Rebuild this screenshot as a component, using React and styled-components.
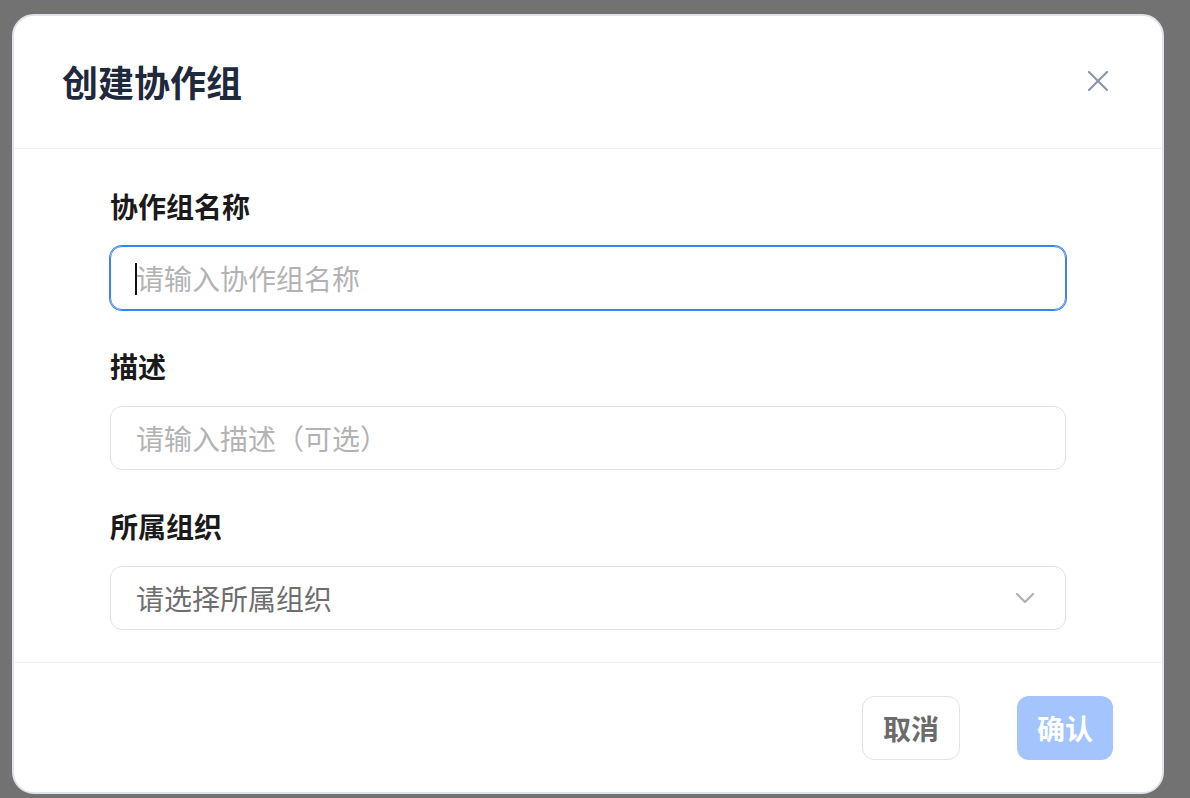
import styled, { createGlobalStyle } from "styled-components";

const GlobalStyle = createGlobalStyle`
  html, body {
    margin: 0;
    padding: 0;
    background: #727272;
    font-family: "Noto Sans CJK SC", "Noto Sans", sans-serif;
  }
  * { box-sizing: border-box; }
`;

// 背景遮罩
const Overlay = styled.div`
  width: 1190px;
  height: 798px;
  padding: 14px 0 0 12px;
  background: #727272;
  overflow: hidden;
`;

const Modal = styled.div`
  width: 1152px;
  height: 780px;
  background: #ffffff;
  border: 2px solid #dfe4ec;
  border-radius: 22px;
  display: flex;
  flex-direction: column;
  overflow: hidden;
`;

const Header = styled.div`
  height: 133px;
  padding: 0 48px 3px;
  display: flex;
  align-items: center;
  justify-content: space-between;
  border-bottom: 1px solid #eef1f5;
`;

const Title = styled.h2`
  margin: 0;
  font-size: 36px;
  line-height: 48px;
  font-weight: 700;
  color: #1e293b;
`;

const CloseBtn = styled.button`
  width: 32px;
  height: 32px;
  padding: 0;
  border: 0;
  background: transparent;
  display: flex;
  align-items: center;
  justify-content: center;
  color: #8a96a8;
  cursor: pointer;
`;

const Body = styled.div`
  flex: 1;
  padding: 38px 96px 32px;
  display: flex;
  flex-direction: column;
  gap: 37px;
`;

const Group = styled.div`
  display: flex;
  flex-direction: column;
`;

const Label = styled.label`
  font-size: 28px;
  line-height: 38px;
  font-weight: 700;
  color: #1a1a1a;
  margin-bottom: 21px;
`;

const FieldWrap = styled.div`
  position: relative;
  height: 64px;
  border-radius: 12px;
  border: 1px solid ${(p) => (p.focused ? "#3b82f6" : "#e3e3e3")};
  box-shadow: ${(p) => (p.focused ? "0 0 0 1px #3b82f6" : "none")};
  display: flex;
  align-items: center;
  padding: 0 30px 0 25px;
`;

const Input = styled.input`
  flex: 1;
  border: 0;
  outline: none;
  padding: 0;
  background: transparent;
  font-family: inherit;
  font-size: 28px;
  line-height: 40px;
  color: #1a1a1a;
  caret-color: transparent;
  &::placeholder {
    color: #b3b3b3;
  }
`;

// 输入框光标
const Caret = styled.span`
  position: absolute;
  left: 24px;
  top: 16px;
  width: 2px;
  height: 32px;
  background: #111;
`;

const SelectText = styled.span`
  flex: 1;
  font-size: 28px;
  line-height: 40px;
  color: #6e6e6e;
`;

const Footer = styled.div`
  flex: 1;
  border-top: 1px solid #eef1f5;
  padding: 0 49px 0 48px;
  display: flex;
  align-items: center;
  justify-content: flex-end;
  gap: 57px;
`;

const Btn = styled.button`
  height: 64px;
  padding: 0 20px;
  border-radius: 12px;
  font-family: inherit;
  font-size: 28px;
  font-weight: 700;
  line-height: 40px;
  cursor: pointer;
  border: 1px solid #e3e3e3;
  background: #ffffff;
  color: #6b6b6b;
`;

const PrimaryBtn = styled(Btn)`
  border: 0;
  background: #a3c4fc;
  color: #ffffff;
`;

function CloseIcon() {
  return (
    <svg width="22" height="22" viewBox="0 0 22 22" fill="none">
      <path
        d="M2 2 L20 20 M20 2 L2 20"
        stroke="currentColor"
        strokeWidth="2.2"
        strokeLinecap="round"
      />
    </svg>
  );
}

function ChevronIcon() {
  return (
    <svg width="20" height="12" viewBox="0 0 20 12" fill="none">
      <path
        d="M2 2 L10 10 L18 2"
        stroke="#b3b3b3"
        strokeWidth="2.4"
        strokeLinecap="round"
        strokeLinejoin="round"
      />
    </svg>
  );
}

export default function App() {
  return (
    <>
      <GlobalStyle />
      <Overlay>
        <Modal>
          <Header>
            <Title>创建协作组</Title>
            <CloseBtn aria-label="关闭">
              <CloseIcon />
            </CloseBtn>
          </Header>
          <Body>
            <Group>
              <Label>协作组名称</Label>
              <FieldWrap focused>
                <Caret />
                <Input placeholder="请输入协作组名称" />
              </FieldWrap>
            </Group>
            <Group>
              <Label>描述</Label>
              <FieldWrap>
                <Input placeholder="请输入描述（可选）" />
              </FieldWrap>
            </Group>
            <Group>
              <Label>所属组织</Label>
              <FieldWrap>
                <SelectText>请选择所属组织</SelectText>
                <ChevronIcon />
              </FieldWrap>
            </Group>
          </Body>
          <Footer>
            <Btn>取消</Btn>
            <PrimaryBtn>确认</PrimaryBtn>
          </Footer>
        </Modal>
      </Overlay>
    </>
  );
}
